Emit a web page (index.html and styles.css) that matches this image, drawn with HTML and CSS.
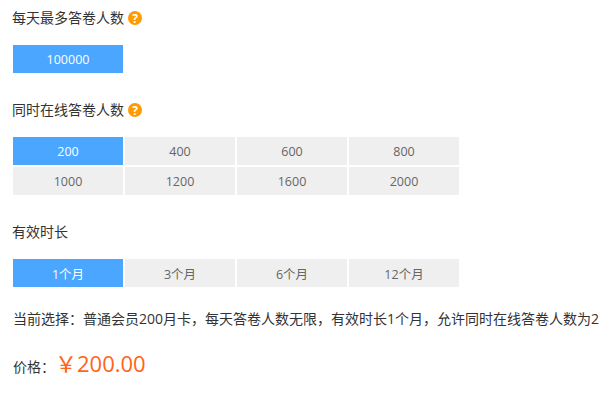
FILE: index.html
```html
<!DOCTYPE html>
<html lang="zh-CN">
<head>
  <meta charset="UTF-8">
  <title>会员购买</title>
  <link rel="stylesheet" href="styles.css">
</head>
<body>
  <div class="order-form">
    <div class="field-title">每天最多答卷人数
      <svg class="help-icon" viewBox="0 0 14 14" width="14" height="14"><circle cx="7" cy="7" r="7" fill="#ff9a00"></circle><text x="7" y="11.5" text-anchor="middle" class="help-mark">?</text></svg>
    </div>
    <div class="option-grid">
      <div class="option active">100000</div>
    </div>

    <div class="field-title">同时在线答卷人数
      <svg class="help-icon" viewBox="0 0 14 14" width="14" height="14"><circle cx="7" cy="7" r="7" fill="#ff9a00"></circle><text x="7" y="11.5" text-anchor="middle" class="help-mark">?</text></svg>
    </div>
    <div class="option-grid">
      <div class="option active">200</div>
      <div class="option">400</div>
      <div class="option">600</div>
      <div class="option">800</div>
      <div class="option">1000</div>
      <div class="option">1200</div>
      <div class="option">1600</div>
      <div class="option">2000</div>
    </div>

    <div class="field-title">有效时长</div>
    <div class="option-grid duration-grid">
      <div class="option active">1个月</div>
      <div class="option">3个月</div>
      <div class="option">6个月</div>
      <div class="option">12个月</div>
    </div>

    <p class="summary">当前选择：普通会员200月卡，每天答卷人数无限，有效时长1个月，允许同时在线答卷人数为2</p>
    <div class="price-row">价格：<span class="price">￥200.00</span></div>
  </div>
</body>
</html>
```

FILE: styles.css
```css
html, body {
  height: 100%;
}

body {
  margin: 0;
  overflow: hidden;
  background-color: #fff;
  color: #333;
  font-family: "Open Sans", "Noto Sans CJK SC", sans-serif;
  font-size: 14px;
}

.order-form {
  padding: 8px 0 0 13px;
}

.field-title {
  display: flex;
  align-items: center;
  gap: 4px;
  height: 20px;
  line-height: 20px;
  margin-left: -1px;
}

.help-icon {
  display: block;
}

.help-mark {
  fill: #fff;
  font-size: 12px;
  font-weight: 700;
}

.option-grid {
  display: grid;
  grid-template-columns: repeat(4, 110px);
  grid-auto-rows: 28px;
  gap: 2px;
  margin: 17px 0 27px;
}

.duration-grid {
  margin-bottom: 22px;
}

.option {
  display: flex;
  justify-content: center;
  align-items: center;
  background-color: #efefef;
  color: #666;
  font-size: 12.5px;
  cursor: pointer;
}

.option.active {
  background-color: #4aa6ff;
  color: #fff;
}

.summary {
  margin: 0;
  line-height: 20px;
  white-space: nowrap;
}

.price-row {
  display: flex;
  align-items: baseline;
  margin: 17px 0 0;
}

.price {
  color: #ff6418;
  font-size: 22px;
}
```
